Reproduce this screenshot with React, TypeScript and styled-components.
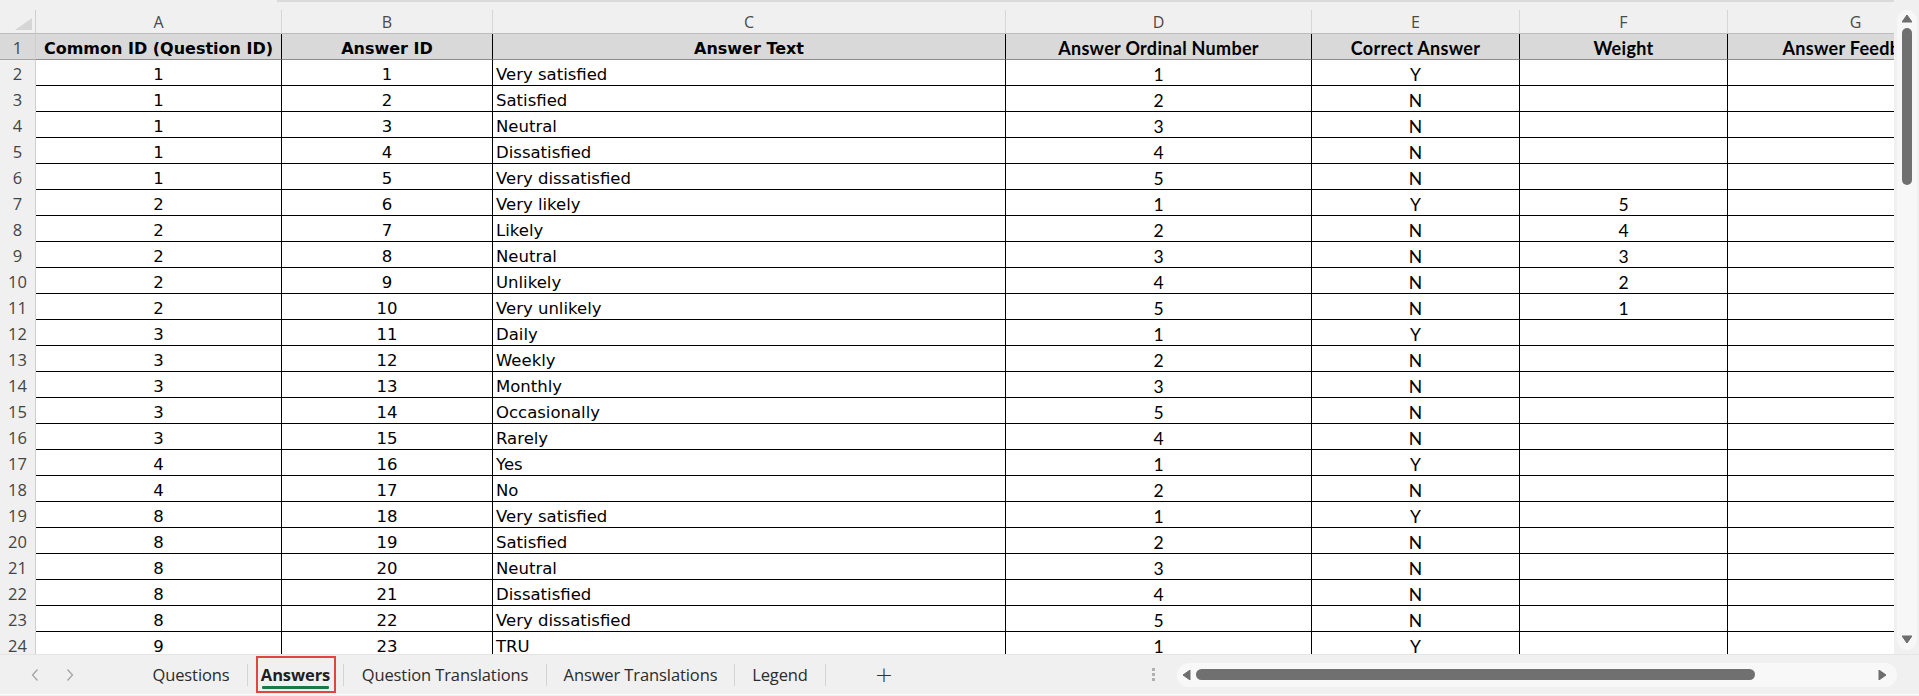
import React from 'react';
import styled, { createGlobalStyle } from 'styled-components';

type Font = 'verdana' | 'calibri';

interface Column {
  letter: string;
  width: number;
  font: Font;
  align: 'left' | 'center';
  title: string;
}

const COLUMNS: Column[] = [
  { letter: 'A', width: 246, font: 'verdana', align: 'center', title: 'Common ID (Question ID)' },
  { letter: 'B', width: 211, font: 'verdana', align: 'center', title: 'Answer ID' },
  { letter: 'C', width: 513, font: 'verdana', align: 'left', title: 'Answer Text' },
  { letter: 'D', width: 306, font: 'calibri', align: 'center', title: 'Answer Ordinal Number' },
  { letter: 'E', width: 208, font: 'calibri', align: 'center', title: 'Correct Answer' },
  { letter: 'F', width: 208, font: 'calibri', align: 'center', title: 'Weight' },
  { letter: 'G', width: 256, font: 'calibri', align: 'center', title: 'Answer Feedback' },
];

const ROWS: string[][] = [
  ['1', '1', 'Very satisfied', '1', 'Y', ''],
  ['1', '2', 'Satisfied', '2', 'N', ''],
  ['1', '3', 'Neutral', '3', 'N', ''],
  ['1', '4', 'Dissatisfied', '4', 'N', ''],
  ['1', '5', 'Very dissatisfied', '5', 'N', ''],
  ['2', '6', 'Very likely', '1', 'Y', '5'],
  ['2', '7', 'Likely', '2', 'N', '4'],
  ['2', '8', 'Neutral', '3', 'N', '3'],
  ['2', '9', 'Unlikely', '4', 'N', '2'],
  ['2', '10', 'Very unlikely', '5', 'N', '1'],
  ['3', '11', 'Daily', '1', 'Y', ''],
  ['3', '12', 'Weekly', '2', 'N', ''],
  ['3', '13', 'Monthly', '3', 'N', ''],
  ['3', '14', 'Occasionally', '5', 'N', ''],
  ['3', '15', 'Rarely', '4', 'N', ''],
  ['4', '16', 'Yes', '1', 'Y', ''],
  ['4', '17', 'No', '2', 'N', ''],
  ['8', '18', 'Very satisfied', '1', 'Y', ''],
  ['8', '19', 'Satisfied', '2', 'N', ''],
  ['8', '20', 'Neutral', '3', 'N', ''],
  ['8', '21', 'Dissatisfied', '4', 'N', ''],
  ['8', '22', 'Very dissatisfied', '5', 'N', ''],
  ['9', '23', 'TRU', '1', 'Y', ''],
];

const TABS = [
  { name: 'Questions', width: 112 },
  { name: 'Answers', width: 95, active: true },
  { name: 'Question Translations', width: 202 },
  { name: 'Answer Translations', width: 187 },
  { name: 'Legend', width: 90 },
];

const TEMPLATE = `36px ${COLUMNS.map((c) => `${c.width}px`).join(' ')}`;

const fontStack = (f: Font) =>
  f === 'verdana' ? `'DejaVu Sans', Verdana, sans-serif` : `Lato, Calibri, 'Liberation Sans', sans-serif`;

const GlobalStyle = createGlobalStyle`
  html, body {
    margin: 0;
    padding: 0;
    background: #f0f0f0;
    overflow: hidden;
  }
`;

const Window = styled.div`
  width: 1919px;
  height: 696px;
  display: flex;
  flex-direction: column;
  background: #f0f0f0;
  overflow: hidden;
  font-family: 'Open Sans', sans-serif;
`;

const SheetArea = styled.div`
  height: 654px;
  display: flex;
  flex-shrink: 0;
`;

const SheetColumn = styled.div`
  width: 1894px;
  display: flex;
  flex-direction: column;
  overflow: hidden;
`;

const TopStrip = styled.div`
  height: 10px;
  flex-shrink: 0;
  padding-left: 277px;
`;

const TopEdge = styled.div`
  height: 2px;
  background: #dadada;
`;

const Grid = styled.div`
  flex: 1;
  overflow: hidden;
  background: #fff;
`;

const Row = styled.div<{ $h: number }>`
  display: grid;
  grid-template-columns: ${TEMPLATE};
  height: ${(p) => p.$h}px;
  width: max-content;
`;

const Corner = styled.div`
  background: #f0f0f0;
  border-right: 1px solid #cfcfcf;
  border-bottom: 1px solid #bdbdbd;
  display: flex;
  justify-content: flex-end;
  align-items: flex-end;
  padding: 0 3px 3px 0;
  box-sizing: border-box;

  &::after {
    content: '';
    width: 17px;
    height: 12px;
    background: #d6d6d6;
    clip-path: polygon(100% 0, 100% 100%, 0 100%);
  }
`;

const ColLetter = styled.div`
  background: #f0f0f0;
  border-right: 1px solid #d6d6d6;
  border-bottom: 1px solid #bdbdbd;
  box-sizing: border-box;
  display: flex;
  align-items: center;
  justify-content: center;
  color: #4a4a4a;
  font-family: 'Open Sans', 'Noto Sans', sans-serif;
  font-size: 16px;
  padding-top: 1px;
`;

const RowNumber = styled.div<{ $head?: boolean }>`
  background: ${(p) => (p.$head ? '#d9d9d9' : '#f0f0f0')};
  border-right: 1px solid #cfcfcf;
  border-bottom: 1px solid ${(p) => (p.$head ? '#a6a6a6' : '#f0f0f0')};
  box-sizing: border-box;
  display: flex;
  align-items: center;
  justify-content: center;
  color: #444;
  font-family: 'Open Sans', 'Noto Sans', sans-serif;
  font-size: 16.5px;
  padding-top: 2px;
`;

const Cell = styled.div<{ $font: Font; $align: 'left' | 'center'; $head?: boolean }>`
  background: ${(p) => (p.$head ? '#d9d9d9' : '#fff')};
  border-right: 1px solid #000;
  border-bottom: 1px solid ${(p) => (p.$head ? '#8c8c8c' : '#000')};
  box-sizing: border-box;
  display: flex;
  align-items: center;
  justify-content: ${(p) => (p.$align === 'left' && !p.$head ? 'flex-start' : 'center')};
  padding: 3px 3px 0;
  white-space: nowrap;
  overflow: hidden;
  color: #000;
  font-family: ${(p) => fontStack(p.$font)};
  font-size: ${(p) => (p.$font === 'verdana' ? (p.$head ? '16px' : '16.5px') : p.$head ? '18px' : '17.5px')};
  letter-spacing: ${(p) => (p.$font === 'calibri' && p.$head ? '0.3px' : '0')};
  font-weight: ${(p) => (p.$head ? 700 : 400)};
`;

const VScroll = styled.div`
  width: 25px;
  display: flex;
  justify-content: center;
  padding: 10px 0 4px;
  box-sizing: border-box;
`;

const VTrack = styled.div`
  width: 20px;
  background: #f7f7f7;
  border-radius: 10px;
  display: flex;
  flex-direction: column;
  align-items: center;
  padding: 4px 0 6px;
  box-sizing: border-box;
`;

const VThumb = styled.div`
  width: 10px;
  height: 157px;
  margin-top: 5px;
  border-radius: 5px;
  background: #707070;
`;

const Spacer = styled.div`
  flex: 1;
`;

const TabBar = styled.div`
  height: 40px;
  flex-shrink: 0;
  display: flex;
  align-items: center;
  border-top: 1px solid #e4e4e4;
  box-sizing: border-box;
`;

const NavButtons = styled.div`
  width: 135px;
  display: flex;
  align-items: center;
  gap: 27px;
  padding-left: 31px;
  box-sizing: border-box;
  flex-shrink: 0;
`;

const Tab = styled.div<{ $w: number }>`
  width: ${(p) => p.$w}px;
  height: 38px;
  display: flex;
  align-items: center;
  justify-content: center;
  flex-shrink: 0;
  box-sizing: border-box;
`;

const TabLabel = styled.span<{ $active?: boolean }>`
  font-family: 'Open Sans', 'Noto Sans', sans-serif;
  font-size: 16.5px;
  letter-spacing: -0.1px;
  white-space: nowrap;
  color: ${(p) => (p.$active ? '#1f1f1f' : '#2b2b2b')};
  font-weight: ${(p) => (p.$active ? 700 : 400)};
`;

const ActiveBox = styled.div`
  width: 80px;
  height: 37px;
  border: 2px solid #e2453d;
  box-sizing: border-box;
  display: flex;
  flex-direction: column;
  align-items: center;
  justify-content: center;
  padding-top: 2px;
`;

const Underline = styled.div`
  width: 67px;
  height: 3px;
  background: #1b7a44;
  border-radius: 1px;
`;

const TabSep = styled.div`
  width: 1px;
  height: 22px;
  background: #d4d4d4;
  flex-shrink: 0;
`;

const AddButton = styled.div`
  width: 116px;
  display: flex;
  justify-content: center;
  flex-shrink: 0;
  color: #333;
  font-family: 'DejaVu Sans', sans-serif;
  font-size: 22px;
  font-weight: 300;
`;

const Dots = styled.div`
  width: 4px;
  margin-left: 210px;
  display: flex;
  flex-direction: column;
  gap: 2px;
  flex-shrink: 0;

  span {
    display: block;
    width: 3px;
    height: 3px;
    background: #b0b0b0;
  }
`;

const HTrack = styled.div`
  flex: 1;
  height: 24px;
  margin: 0 22px 0 21px;
  background: #f8f8f8;
  border-radius: 12px;
  display: flex;
  align-items: center;
  padding: 0 10px 0 5px;
  box-sizing: border-box;
`;

const HThumb = styled.div`
  width: 559px;
  height: 11px;
  margin-left: 5px;
  border-radius: 6px;
  background: #707070;
`;

const BottomStrip = styled.div`
  flex: 1;
  border-top: 1px solid #fafafa;
  background: #f0f0f0;
`;

const Tri: React.FC<{ dir: 'up' | 'down' | 'left' | 'right' }> = ({ dir }) => {
  const pts = {
    up: '0,8 5,1 10,8',
    down: '0,1 10,1 5,8',
    left: '8,0 8,10 1,5',
    right: '1,0 1,10 8,5',
  }[dir];
  const vertical = dir === 'up' || dir === 'down';
  return (
    <svg width={vertical ? 10 : 9} height={vertical ? 9 : 10} viewBox={vertical ? '0 0 10 9' : '0 0 9 10'}>
      <polygon points={pts} fill="#6e6e6e" strokeLinejoin="round" stroke="#6e6e6e" strokeWidth="1" />
    </svg>
  );
};

const Chevron: React.FC<{ flip?: boolean }> = ({ flip }) => (
  <svg width="8" height="14" viewBox="0 0 8 14">
    <path
      d={flip ? 'M1.5 1.5 L6.5 7 L1.5 12.5' : 'M6.5 1.5 L1.5 7 L6.5 12.5'}
      fill="none"
      stroke="#a0a0a0"
      strokeWidth="1.2"
    />
  </svg>
);

export default function App() {
  return (
    <Window>
      <GlobalStyle />
      <SheetArea>
        <SheetColumn>
          <TopStrip>
            <TopEdge />
          </TopStrip>
          <Grid>
            <Row $h={24}>
              <Corner />
              {COLUMNS.map((c) => (
                <ColLetter key={c.letter}>{c.letter}</ColLetter>
              ))}
            </Row>
            <Row $h={26}>
              <RowNumber $head>1</RowNumber>
              {COLUMNS.map((c) => (
                <Cell key={c.letter} $font={c.font} $align={c.align} $head>
                  {c.title}
                </Cell>
              ))}
            </Row>
            {ROWS.map((r, i) => (
              <Row key={i} $h={26}>
                <RowNumber>{i + 2}</RowNumber>
                {COLUMNS.map((c, j) => (
                  <Cell key={c.letter} $font={c.font} $align={c.align}>
                    {r[j] ?? ''}
                  </Cell>
                ))}
              </Row>
            ))}
          </Grid>
        </SheetColumn>
        <VScroll>
          <VTrack>
            <Tri dir="up" />
            <VThumb />
            <Spacer />
            <Tri dir="down" />
          </VTrack>
        </VScroll>
      </SheetArea>
      <TabBar>
        <NavButtons>
          <Chevron />
          <Chevron flip />
        </NavButtons>
        {TABS.map((t, i) => (
          <React.Fragment key={t.name}>
            {i > 0 && <TabSep />}
            <Tab $w={t.width}>
              {t.active ? (
                <ActiveBox>
                  <TabLabel $active>{t.name}</TabLabel>
                  <Underline />
                </ActiveBox>
              ) : (
                <TabLabel>{t.name}</TabLabel>
              )}
            </Tab>
          </React.Fragment>
        ))}
        <TabSep />
        <AddButton>+</AddButton>
        <Dots>
          <span />
          <span />
          <span />
        </Dots>
        <HTrack>
          <Tri dir="left" />
          <HThumb />
          <Spacer />
          <Tri dir="right" />
        </HTrack>
      </TabBar>
      <BottomStrip />
    </Window>
  );
}
